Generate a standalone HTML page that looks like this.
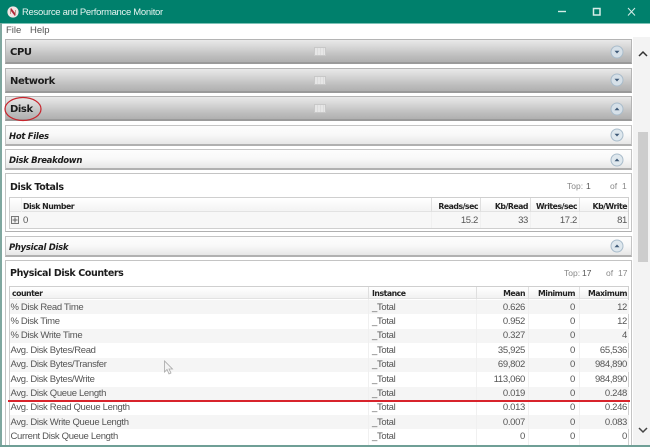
<!DOCTYPE html>
<html><head><meta charset="utf-8">
<style>
*{box-sizing:border-box}
html{margin:0;padding:0;background:#fff;overflow:hidden;width:650px;height:447px}
body{margin:0;padding:0;background:#fff;width:650px;height:447px;position:relative;overflow:hidden;font-family:"Liberation Sans",sans-serif;filter:blur(.3px)}
.a{position:absolute}
.t{position:absolute;white-space:nowrap}
.p{position:absolute;left:5px;width:627px;border:1px solid #b4b4b4;border-bottom:2px solid #9a9a9a}
.g{background:linear-gradient(#e9e9e9 0,#d8d8d8 30%,#bcbcbc 75%,#b0b0b0 100%)}
.l{background:linear-gradient(#fdfdfd 0,#f8f8f8 50%,#e6e6e6 100%);border-color:#c4c4c4;border-bottom-color:#b0b0b0}
.b{font-family:"DejaVu Sans",sans-serif;font-weight:bold;color:#1c1c1c;font-size:10px;letter-spacing:-.4px;line-height:14px}
.s{font-size:9.5px;letter-spacing:-.4px}
.i{font-family:"DejaVu Sans",sans-serif;font-weight:bold;font-style:italic;color:#1c1c1c;font-size:8.5px;letter-spacing:-.3px;line-height:12px}
.c{position:absolute;left:610px;width:14px;height:14px}
.m{position:absolute;left:314px;width:12px;height:9px;background:repeating-linear-gradient(90deg,#e6e6e6 0 2px,#dcdcdc 2px 3px);border:1px solid #c8c8c8}
.h{font-family:"DejaVu Sans",sans-serif;font-weight:bold;font-size:7.8px;letter-spacing:-.5px;color:#222;line-height:11px}
.r{font-size:9.5px;letter-spacing:-.33px;color:#555;line-height:12px}
.ra{text-align:right}
.row{position:absolute;left:10px;width:619px;height:14.35px}
.alt{background:#f5f5f5}
.top{font-size:8.5px;color:#888;line-height:10px}
.v{position:absolute;width:1px;background:#dfdfdf}
.w{background:#f0f0f0}
</style></head>
<body>
<div class="a" style="left:0;top:0;width:650px;height:23px;background:#00806c"></div>
<div class="a" style="left:0;top:23px;width:650px;height:1px;background:#7cc2b6"></div>
<div class="a" style="left:0;top:23px;width:1.5px;height:424px;background:#7fa79f"></div>
<svg class="a" style="left:7px;top:6px" width="12" height="12" viewBox="0 0 12 12"><circle cx="6" cy="6" r="5.6" fill="#f2e6e6"/><path d="M3.5 2.8L8.5 9.2" stroke="#b02a3a" stroke-width="2"/><path d="M3.5 3V8M8.500 4V9" stroke="#b98" stroke-width="1"/></svg>
<div class="t" style="left:22px;top:6px;font-size:9.5px;letter-spacing:-.3px;line-height:13px;color:#e6f4f1">Resource and Performance Monitor</div>
<svg class="a" style="left:555px;top:5px" width="90" height="14" viewBox="0 0 90 14"><path d="M3 6.500H11" stroke="#d5ece7" stroke-width="1.4"/><rect x="38.500" y="3.500" width="6.500" height="6.500" fill="none" stroke="#d5ece7" stroke-width="1.5"/><path d="M73 3L80 10.500M80 3L73 10.500" stroke="#d5ece7" stroke-width="1"/></svg>

<div class="t" style="left:6px;top:25px;font-size:9.5px;line-height:12px;color:#555">File</div>
<div class="t" style="left:30px;top:25px;font-size:9.5px;line-height:12px;color:#555">Help</div>

<!-- bars -->
<div class="p g" style="top:39px;height:25px"></div>
<div class="t b" style="left:10px;top:46px">CPU</div>
<div class="m" style="top:47px"></div>
<svg class="c" style="top:45px" viewBox="0 0 14 14"><circle cx="7" cy="7" r="6" fill="#d6e0e8" stroke="#a9bccb"/><path d="M4.500 5.800H9.500L7 8.500Z" fill="#3f5a78"/></svg>

<div class="p g" style="top:68px;height:25px"></div>
<div class="t b" style="left:10px;top:75px">Network</div>
<div class="m" style="top:76px"></div>
<svg class="c" style="top:73px" viewBox="0 0 14 14"><circle cx="7" cy="7" r="6" fill="#d6e0e8" stroke="#a9bccb"/><path d="M4.500 5.800H9.500L7 8.500Z" fill="#3f5a78"/></svg>

<div class="p g" style="top:96px;height:25px"></div>
<div class="t b" style="left:10px;top:103px">Disk</div>
<div class="m" style="top:104px"></div>
<svg class="c" style="top:102px" viewBox="0 0 14 14"><circle cx="7" cy="7" r="6" fill="#d6e0e8" stroke="#a9bccb"/><path d="M4.500 8.200H9.500L7 5.500Z" fill="#3f5a78"/></svg>
<svg class="a" style="left:3px;top:96px" width="40" height="26" viewBox="0 0 40 26"><ellipse cx="20" cy="13" rx="18" ry="11.500" fill="none" stroke="#c8242c" stroke-width="1.200"/></svg>

<div class="p l" style="top:125px;height:21px"></div>
<div class="t i" style="left:9px;top:131px">Hot Files</div>
<svg class="c" style="top:128px" viewBox="0 0 14 14"><circle cx="7" cy="7" r="6" fill="#dfe8ee" stroke="#a9bccb"/><path d="M4.500 5.800H9.500L7 8.500Z" fill="#3f5a78"/></svg>

<div class="p l" style="top:149px;height:21px"></div>
<div class="t i" style="left:9px;top:155px">Disk Breakdown</div>
<svg class="c" style="top:153px" viewBox="0 0 14 14"><circle cx="7" cy="7" r="6" fill="#dfe8ee" stroke="#a9bccb"/><path d="M4.500 8.200H9.500L7 5.500Z" fill="#3f5a78"/></svg>

<!-- Disk Totals -->
<div class="a" style="left:5px;top:173px;width:627px;height:58.500px;border:1px solid #c4c4c4;border-bottom:1.500px solid #b0b0b0;background:#fff"></div>
<div class="t b s" style="left:10px;top:181px">Disk Totals</div>
<div class="t top" style="left:567px;top:181px">Top:</div>
<div class="t top" style="left:586px;top:181px;color:#555">1</div>
<div class="t top" style="left:610px;top:181px">of</div>
<div class="t top" style="left:622px;top:181px">1</div>
<div class="a" style="left:9px;top:197px;width:620px;height:32px;border:1px solid #cfcfcf;background:#f7f7f7"></div>
<div class="a" style="left:10px;top:198px;width:618px;height:14px;background:linear-gradient(#fff,#f3f3f3);border-bottom:1px solid #e2e2e2"></div>
<div class="v w" style="left:21px;top:198px;height:14px"></div>
<div class="v" style="left:431px;top:198px;height:14px"></div>
<div class="v" style="left:480px;top:198px;height:14px"></div>
<div class="v" style="left:530px;top:198px;height:14px"></div>
<div class="v" style="left:579px;top:198px;height:14px"></div>
<div class="v w" style="left:431px;top:212px;height:16px"></div>
<div class="v w" style="left:480px;top:212px;height:16px"></div>
<div class="v w" style="left:530px;top:212px;height:16px"></div>
<div class="v w" style="left:579px;top:212px;height:16px"></div>
<div class="t h" style="left:23px;top:201px">Disk Number</div>
<div class="t h ra" style="right:172px;top:201px">Reads/sec</div>
<div class="t h ra" style="right:122px;top:201px">Kb/Read</div>
<div class="t h ra" style="right:73px;top:201px">Writes/sec</div>
<div class="t h ra" style="right:23px;top:201px">Kb/Write</div>
<svg class="a" style="left:11px;top:216px" width="8" height="8" viewBox="0 0 8 8"><rect x=".5" y=".5" width="7" height="7" fill="#f0f0f0" stroke="#777"/><path d="M1.500 4H6.500M4 1.500V6.500" stroke="#666"/></svg>
<div class="t r" style="left:23px;top:215px">0</div>
<div class="t r ra" style="right:172px;top:215px">15.2</div>
<div class="t r ra" style="right:122px;top:215px">33</div>
<div class="t r ra" style="right:73px;top:215px">17.2</div>
<div class="t r ra" style="right:23px;top:215px">81</div>

<div class="p l" style="top:236px;height:21px"></div>
<div class="t i" style="left:9px;top:242px">Physical Disk</div>
<svg class="c" style="top:239px" viewBox="0 0 14 14"><circle cx="7" cy="7" r="6" fill="#dfe8ee" stroke="#a9bccb"/><path d="M4.500 8.200H9.500L7 5.500Z" fill="#3f5a78"/></svg>

<!-- Physical Disk Counters -->
<div class="a" style="left:5px;top:260px;width:627px;height:187px;border:1px solid #c4c4c4;border-bottom:0;background:#fff"></div>
<div class="t b s" style="left:10px;top:267px">Physical Disk Counters</div>
<div class="t top" style="left:564px;top:268px">Top:</div>
<div class="t top" style="left:582px;top:268px;color:#555">17</div>
<div class="t top" style="left:606px;top:268px">of</div>
<div class="t top" style="left:618px;top:268px">17</div>
<div class="a" style="left:9px;top:286px;width:620px;height:161px;border:1px solid #cfcfcf;border-bottom:0;background:#fff"></div>
<div class="a" style="left:10px;top:287px;width:618px;height:12px;background:linear-gradient(#fff,#f1f1f1);border-bottom:1px solid #e2e2e2"></div>
<div class="t h" style="left:12px;top:288px">counter</div>
<div class="t h" style="left:372px;top:288px">Instance</div>
<div class="t h ra" style="right:125px;top:288px">Mean</div>
<div class="t h ra" style="right:75px;top:288px">Minimum</div>
<div class="t h ra" style="right:23px;top:288px">Maximum</div>

<div class="row alt" style="top:300px"></div>
<div class="row alt" style="top:329px"></div>
<div class="row alt" style="top:357.500px"></div>
<div class="row alt" style="top:386.500px"></div>
<div class="row alt" style="top:415px"></div>
<div class="v" style="left:368px;top:287px;height:12px"></div>
<div class="v" style="left:476px;top:287px;height:12px"></div>
<div class="v" style="left:528px;top:287px;height:12px"></div>
<div class="v" style="left:579px;top:287px;height:12px"></div>
<div class="v w" style="left:368px;top:299px;height:146px"></div>
<div class="v w" style="left:476px;top:299px;height:146px"></div>
<div class="v w" style="left:528px;top:299px;height:146px"></div>
<div class="v w" style="left:579px;top:299px;height:146px"></div>

<div class="t r" style="left:10.500px;top:302px">% Disk Read Time</div><div class="t r" style="left:372px;top:302px">_Total</div><div class="t r ra" style="right:125px;top:302px">0.626</div><div class="t r ra" style="right:75px;top:302px">0</div><div class="t r ra" style="right:23px;top:302px">12</div>
<div class="t r" style="left:10.500px;top:316px">% Disk Time</div><div class="t r" style="left:372px;top:316px">_Total</div><div class="t r ra" style="right:125px;top:316px">0.952</div><div class="t r ra" style="right:75px;top:316px">0</div><div class="t r ra" style="right:23px;top:316px">12</div>
<div class="t r" style="left:10.500px;top:330px">% Disk Write Time</div><div class="t r" style="left:372px;top:330px">_Total</div><div class="t r ra" style="right:125px;top:330px">0.327</div><div class="t r ra" style="right:75px;top:330px">0</div><div class="t r ra" style="right:23px;top:330px">4</div>
<div class="t r" style="left:10.500px;top:345px">Avg. Disk Bytes/Read</div><div class="t r" style="left:372px;top:345px">_Total</div><div class="t r ra" style="right:125px;top:345px">35,925</div><div class="t r ra" style="right:75px;top:345px">0</div><div class="t r ra" style="right:23px;top:345px">65,536</div>
<div class="t r" style="left:10.500px;top:359px">Avg. Disk Bytes/Transfer</div><div class="t r" style="left:372px;top:359px">_Total</div><div class="t r ra" style="right:125px;top:359px">69,802</div><div class="t r ra" style="right:75px;top:359px">0</div><div class="t r ra" style="right:23px;top:359px">984,890</div>
<div class="t r" style="left:10.500px;top:374px">Avg. Disk Bytes/Write</div><div class="t r" style="left:372px;top:374px">_Total</div><div class="t r ra" style="right:125px;top:374px">113,060</div><div class="t r ra" style="right:75px;top:374px">0</div><div class="t r ra" style="right:23px;top:374px">984,890</div>
<div class="t r" style="left:10.500px;top:388px">Avg. Disk Queue Length</div><div class="t r" style="left:372px;top:388px">_Total</div><div class="t r ra" style="right:125px;top:388px">0.019</div><div class="t r ra" style="right:75px;top:388px">0</div><div class="t r ra" style="right:23px;top:388px">0.248</div>
<div class="t r" style="left:10.500px;top:402px">Avg. Disk Read Queue Length</div><div class="t r" style="left:372px;top:402px">_Total</div><div class="t r ra" style="right:125px;top:402px">0.013</div><div class="t r ra" style="right:75px;top:402px">0</div><div class="t r ra" style="right:23px;top:402px">0.246</div>
<div class="t r" style="left:10.500px;top:417px">Avg. Disk Write Queue Length</div><div class="t r" style="left:372px;top:417px">_Total</div><div class="t r ra" style="right:125px;top:417px">0.007</div><div class="t r ra" style="right:75px;top:417px">0</div><div class="t r ra" style="right:23px;top:417px">0.083</div>
<div class="t r" style="left:10.500px;top:431px">Current Disk Queue Length</div><div class="t r" style="left:372px;top:431px">_Total</div><div class="t r ra" style="right:125px;top:431px">0</div><div class="t r ra" style="right:75px;top:431px">0</div><div class="t r ra" style="right:23px;top:431px">0</div>

<div class="a" style="left:8px;top:400px;width:622px;height:1.500px;background:#d8242c"></div>

<svg class="a" style="left:163px;top:360px" width="12" height="16" viewBox="0 0 12 16"><path d="M1.500 1V12L4 9.500L6 14L8 13L6 9H9.500Z" fill="#f4f4f4" stroke="#a8a8a8" stroke-width=".8"/></svg>

<!-- scrollbar -->
<div class="a" style="left:633px;top:37px;width:17px;height:408px;background:#f3f3f3"></div>
<div class="a" style="left:638px;top:132px;width:10px;height:130px;background:#cdcdcd"></div>
<svg class="a" style="left:637px;top:49px" width="12" height="10" viewBox="0 0 12 10"><path d="M2 7L6 3L10 7" fill="none" stroke="#333" stroke-width="1.500"/></svg>
<svg class="a" style="left:637px;top:425px" width="12" height="10" viewBox="0 0 12 10"><path d="M2 3L6 7L10 3" fill="none" stroke="#444" stroke-width="1.500"/></svg>
<div class="a" style="left:0;top:445px;width:650px;height:2px;background:#6f9f96"></div>
</body></html>
